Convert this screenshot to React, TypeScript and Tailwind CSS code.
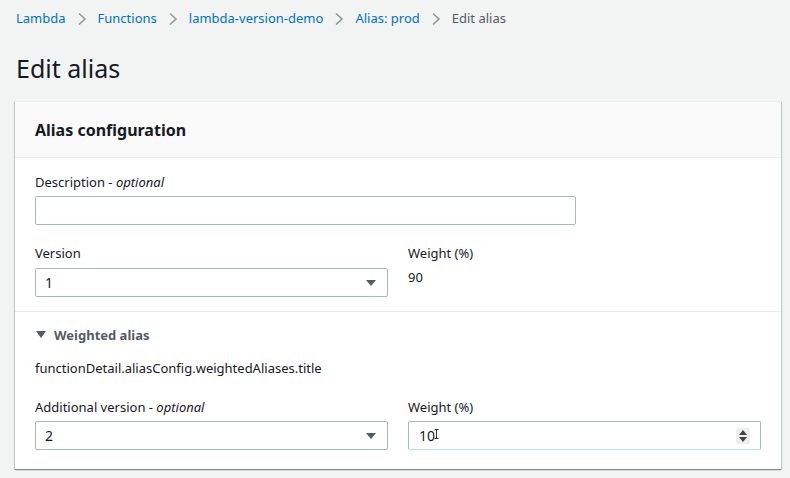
export default function App() {
  const crumbs = ['Lambda', 'Functions', 'lambda-version-demo', 'Alias: prod'];

  const Chevron = () => (
    <svg width="10" height="14" viewBox="0 0 10 14" className="shrink-0">
      <path d="M2 1.5 L8 7 L2 12.5" fill="none" stroke="#879596" strokeWidth="1.5" />
    </svg>
  );

  const Caret = () => (
    <svg width="12" height="8" viewBox="0 0 12 8">
      <path d="M1 1 L11 1 L6 7 Z" fill="#545b64" />
    </svg>
  );

  return (
    <div className="min-h-[478px] w-[790px] bg-[#f2f3f3] pl-[15px] pr-[9px] pt-[10px] text-[#16191f]" style={{ fontFamily: '"Noto Sans", Arial, sans-serif' }}>
      {/* Breadcrumbs */}
      <nav className="flex h-[18px] items-center gap-[11px] pl-px text-[13px]">
        {crumbs.map((c) => (
          <div key={c} className="flex items-center gap-[11px]">
            <span className="text-[#0073bb]">{c}</span>
            <Chevron />
          </div>
        ))}
        <span className="text-[#545b64]">Edit alias</span>
      </nav>

      <h1 className="mt-[23px] pl-px text-[25px] leading-[34px] text-[#16191f]">Edit alias</h1>

      {/* Card */}
      <div className="mt-[16px] border-t border-[#eaeded] bg-white shadow-[0_1px_1px_0_rgba(0,28,36,0.3),1px_1px_1px_0_rgba(0,28,36,0.15),-1px_1px_1px_0_rgba(0,28,36,0.15)]">
        <div className="flex h-[56px] items-center border-b border-[#eaeded] bg-[#fafafa] px-5">
          <h2 className="text-[16px] font-bold">Alias configuration</h2>
        </div>

        <div className="border-b border-[#eaeded] px-5 pt-[14px] pb-[14px] text-[13px]">
          <label className="block leading-[20px]">
            Description - <i>optional</i>
          </label>
          <div className="mt-[4px] h-[29px] w-[541px] rounded-[2px] border border-[#aab7b8] bg-white" />

          <div className="mt-[18px] grid grid-cols-2 gap-x-5">
            <div>
              <label className="block leading-[20px]">Version</label>
              <div className="mt-[5px] flex h-[29px] items-center justify-between rounded-[2px] border border-[#aab7b8] pl-[9px] pr-[10px] text-[14px]">
                <span>1</span>
                <Caret />
              </div>
            </div>
            <div>
              <label className="block leading-[20px]">Weight (%)</label>
              <div className="mt-[4px] leading-[20px]">90</div>
            </div>
          </div>
        </div>

        <div className="px-5 pt-[13px] pb-[19px] text-[13px]">
          <div className="flex items-center gap-[8px] leading-[20px] font-bold text-[#545b64]">
            <svg width="10" height="8" viewBox="0 0 10 8" className="ml-px">
              <path d="M0 0 L10 0 L5 7 Z" fill="#545b64" />
            </svg>
            <span>Weighted alias</span>
          </div>
          <p className="mt-[13px] leading-[20px]">functionDetail.aliasConfig.weightedAliases.title</p>

          <div className="mt-[19px] grid grid-cols-2 gap-x-5">
            <div>
              <label className="block leading-[20px]">
                Additional version - <i>optional</i>
              </label>
              <div className="mt-[4px] flex h-[29px] items-center justify-between rounded-[2px] border border-[#aab7b8] pl-[9px] pr-[10px] text-[14px]">
                <span>2</span>
                <Caret />
              </div>
            </div>
            <div>
              <label className="block leading-[20px]">Weight (%)</label>
              <div className="mt-[4px] flex h-[29px] items-center justify-between rounded-[2px] border border-[#aab7b8] border-b-[#b9e3e7] pl-[10px] pr-[10px] text-[14px]">
                <span className="flex items-center">
                  10
                  <svg width="5" height="10" viewBox="0 0 5 10" className="-ml-px -mt-[4px]">
                    <path d="M0.5 0.5 H4.5 M2.5 0.5 V9.5 M0.5 9.5 H4.5" stroke="#333" strokeWidth="1" fill="none" />
                  </svg>
                </span>
                <div className="flex h-[16px] w-[14px] flex-col items-center justify-center gap-[2px] bg-[#eeeeee]">
                  <svg width="8" height="5" viewBox="0 0 8 5"><path d="M0 5 L4 0 L8 5 Z" fill="#444" /></svg>
                  <svg width="8" height="5" viewBox="0 0 8 5"><path d="M0 0 L8 0 L4 5 Z" fill="#444" /></svg>
                </div>
              </div>
            </div>
          </div>
        </div>
      </div>
    </div>
  );
}
